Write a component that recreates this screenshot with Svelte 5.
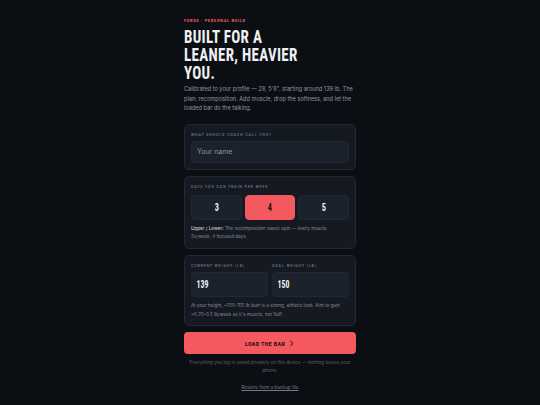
<script>
  let name = $state("");
  let days = $state(4);
  let current = $state(139);
  let goal = $state(150);
  const options = [3, 4, 5];
</script>

<main class="page">
  <p class="eyebrow">FORGE · PERSONAL BUILD</p>
  <h1>BUILT FOR A<br />LEANER, HEAVIER<br />YOU.</h1>
  <p class="intro">
    Calibrated to your profile — 28, 5'8", starting around 139 lb. The plan: recomposition. Add
    muscle, drop the softness, and let the loaded bar do the talking.
  </p>

  <section class="card">
    <label class="label" for="name">WHAT SHOULD COACH CALL YOU?</label>
    <input id="name" class="field" placeholder="Your name" bind:value={name} />
  </section>

  <section class="card">
    <div class="label wide">DAYS YOU CAN TRAIN PER WEEK</div>
    <div class="days">
      {#each options as d}
        <button class="day" class:active={days === d} onclick={() => (days = d)}><span>{d}</span></button>
      {/each}
    </div>
    <p class="note"><b>Upper / Lower:</b> The recomposition sweet spot — every muscle 2x/week, 4 focused days.</p>
  </section>

  <section class="card">
    <div class="weights">
      <div>
        <label class="label" for="cur">CURRENT WEIGHT (LB)</label>
        <input id="cur" class="field num" bind:value={current} />
      </div>
      <div>
        <label class="label" for="goal">GOAL WEIGHT (LB)</label>
        <input id="goal" class="field num" bind:value={goal} />
      </div>
    </div>
    <p class="note spaced">At your height, ~150–155 lb lean is a strong, athletic look. Aim to gain ~0.25–0.5 lb/week so it's muscle, not fluff.</p>
  </section>

  <button class="cta">
    <span>LOAD THE BAR</span>
    <svg width="7" height="7" viewBox="0 0 8 8" fill="none" stroke="currentColor" stroke-width="1.1"><path d="M2.5 1 L5.8 4 L2.5 7" /></svg>
  </button>

  <p class="fine">Everything you log is saved privately on this device — nothing leaves your phone.</p>
  <a class="restore" href="#restore">Restore from a backup file</a>
</main>

<style>
  :global(body) {
    margin: 0;
    background: #0b0e13;
  }

  .page {
    box-sizing: border-box;
    width: 172px;
    height: 405px;
    margin: 0 auto;
    padding-top: 17.5px;
    font-family: Inter, "Liberation Sans", sans-serif;
    overflow: hidden;
  }

  .eyebrow {
    margin: 0 0 4px;
    font: 700 4.4px/6px Roboto, sans-serif;
    font-stretch: 75%;
    letter-spacing: 0.69px;
    color: #f4595f;
  }

  /* no condensed face is installed, so the display text is squeezed */
  h1 {
    width: 127%;
    margin: 0 0 3.5px;
    font: 700 19px/18px Roboto, sans-serif;
    font-stretch: 75%;
    color: #eef0f2;
    letter-spacing: 0.4px;
    transform: scaleX(0.79);
    transform-origin: left;
  }

  .intro {
    margin: 0 0 9.5px;
    font-size: 5.6px;
    line-height: 9.7px;
    color: #9096a2;
  }

  .card {
    box-sizing: border-box;
    margin-bottom: 6.5px;
    padding: 6px;
    background: #141922;
    border: 1px solid #222834;
    border-radius: 5px;
  }

  .label {
    display: block;
    font: 500 4.3px/7px Roboto, sans-serif;
    font-stretch: 75%;
    letter-spacing: 0.77px;
    color: #6b7280;
    margin-bottom: 3px;
  }

  .label.wide {
    margin-bottom: 5px;
  }

  .field {
    box-sizing: border-box;
    display: block;
    width: 100%;
    height: 22px;
    padding: 0 5px;
    background: #1c222c;
    border: 1px solid #222834;
    border-radius: 4px;
    font: 400 7px Inter, sans-serif;
    color: #eef0f2;
    outline: none;
  }

  .field::placeholder {
    color: #8d94a0;
  }

  .num {
    width: 143%;
    height: 24.5px;
    padding: 0 7px;
    border-radius: 5.7px / 4px;
    font: 700 11.3px Roboto, sans-serif;
    font-stretch: 75%;
    transform: scaleX(0.7);
    transform-origin: left;
  }

  .days {
    display: grid;
    grid-template-columns: repeat(3, 1fr);
    gap: 3px;
  }

  .day {
    height: 25px;
    padding: 0;
    background: #1c222c;
    border: 1px solid #222834;
    border-radius: 4px;
    font: 700 11px Roboto, sans-serif;
    font-stretch: 75%;
    color: #eef0f2;
  }

  .day span {
    display: inline-block;
    transform: scaleX(0.75);
  }

  .day.active {
    background: #f4595f;
    border-color: #f4595f;
    color: #2a0c10;
  }

  .weights {
    display: grid;
    grid-template-columns: 1fr 1fr;
    gap: 4px;
  }

  .note {
    margin: 5px 0 0;
    padding-right: 3px;
    font-size: 4.6px;
    line-height: 8.3px;
    color: #858b97;
  }

  .note.spaced {
    margin-top: 5.5px;
  }

  .note b {
    font-weight: 500;
    color: #c4c8ce;
  }

  .cta {
    display: flex;
    align-items: center;
    justify-content: center;
    gap: 3px;
    box-sizing: border-box;
    width: 100%;
    height: 21.7px;
    padding: 0;
    background: #f4595f;
    border: 0;
    border-radius: 4px;
    font: 700 6px Roboto, sans-serif;
    font-stretch: 75%;
    letter-spacing: 0.35px;
    color: #2a0c10;
  }

  .fine {
    margin: 5.5px 0 0;
    font-size: 4.6px;
    line-height: 7.3px;
    text-align: center;
    color: #5a606c;
  }

  .restore {
    display: block;
    width: max-content;
    margin: 10px auto 0;
    font-size: 4.6px;
    line-height: 8px;
    color: #727985;
  }
</style>
